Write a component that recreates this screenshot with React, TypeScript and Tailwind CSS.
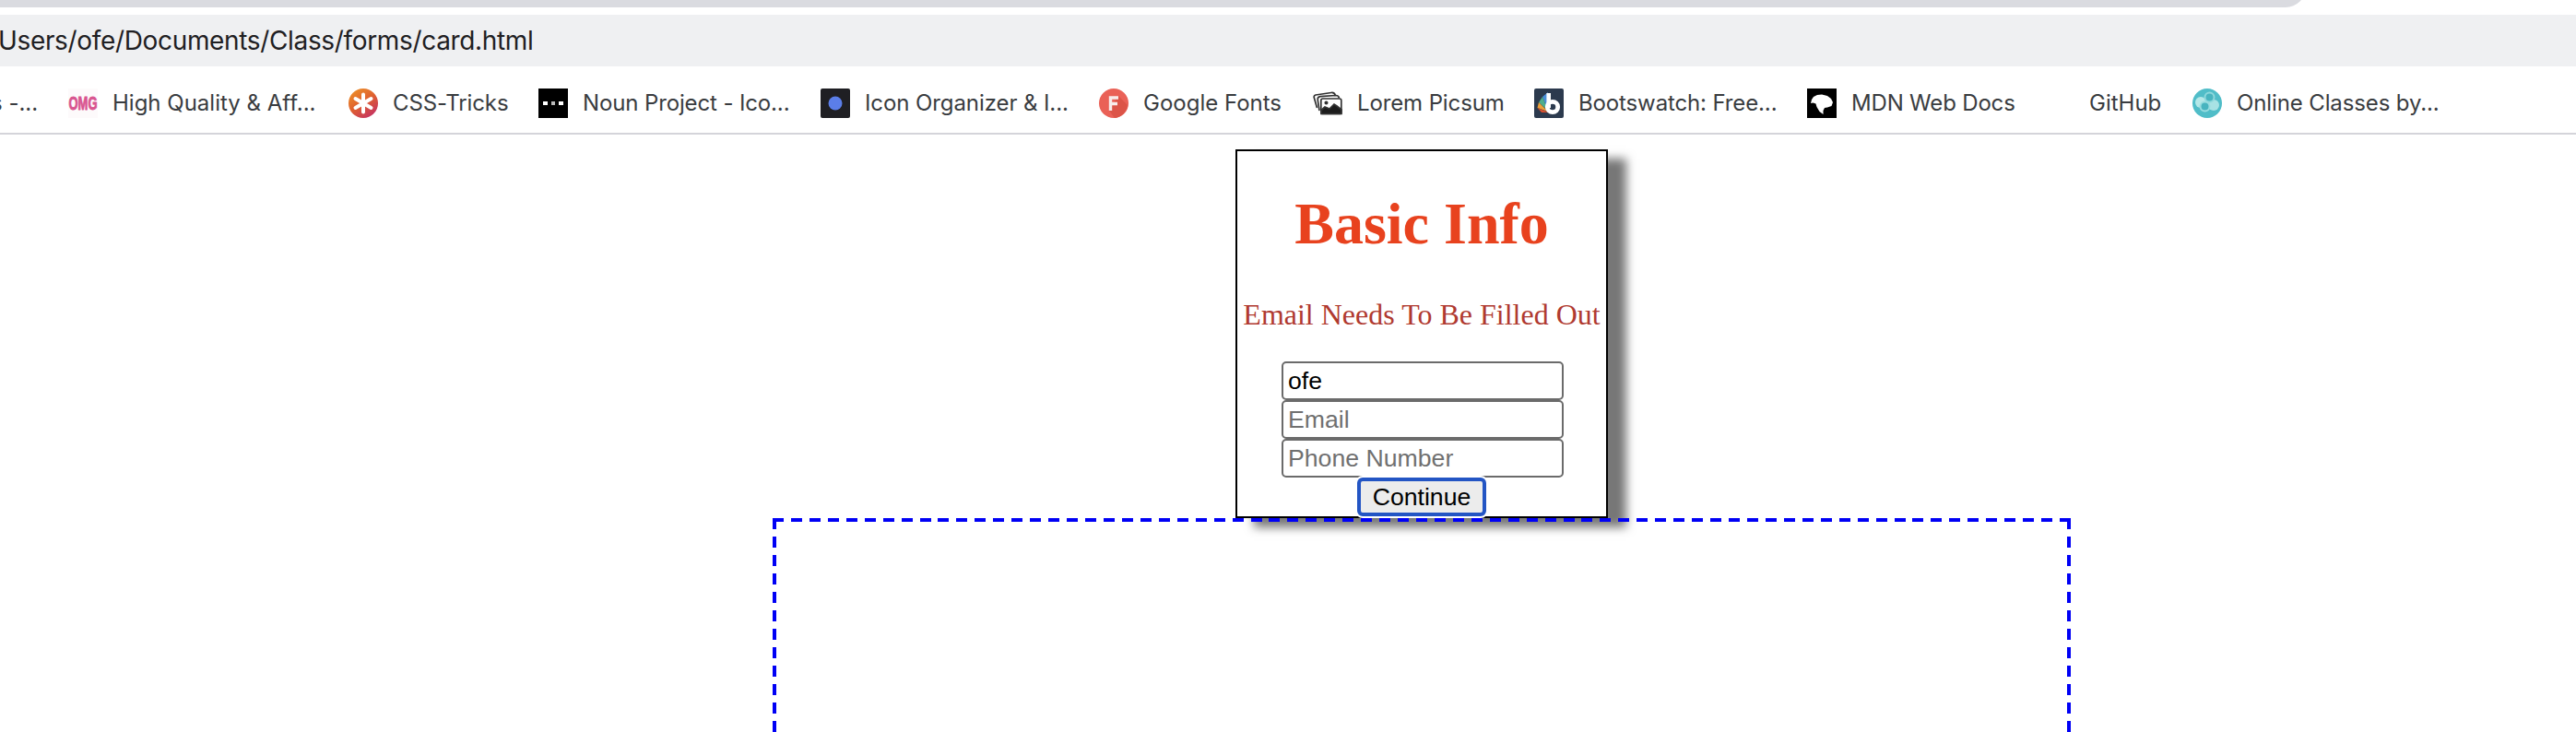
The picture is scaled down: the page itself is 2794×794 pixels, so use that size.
import React from "react";

const icon = "block h-8 w-8 shrink-0";

const Omg = () => (
  <svg className={icon} viewBox="0 0 32 32">
    <rect width="32" height="32" fill="#fdfafb" />
    <text x="0.5" y="23.2" fontFamily="Liberation Sans, sans-serif" fontWeight="700" fontSize="20" textLength="31" lengthAdjust="spacingAndGlyphs" fill="#d95590" stroke="#d95590" strokeWidth="0.9">OMG</text>
  </svg>
);
const Tricks = () => (
  <svg className={icon} viewBox="0 0 32 32">
    <defs>
      <linearGradient id="tricks" x1="0.1" y1="0" x2="0.8" y2="1">
        <stop offset="0" stopColor="#ee9428" />
        <stop offset="0.5" stopColor="#df602f" />
        <stop offset="1" stopColor="#c32f66" />
      </linearGradient>
    </defs>
    <circle cx="16" cy="16" r="16" fill="url(#tricks)" />
    <path d="M16 6.500v19M7.500 11l17 10M24.500 11l-17 10" stroke="#fff" strokeWidth="4" strokeLinecap="round" />
  </svg>
);
const Noun = () => (
  <svg className={icon} viewBox="0 0 32 32">
    <rect width="32" height="32" fill="#000" />
    <path d="M5 14h5v4H5zM22 14h5v4h-5z" fill="#fff" />
    <path d="M14 14h4v4h-4z" fill="#bbb" />
  </svg>
);
const Organizer = () => (
  <svg className={icon} viewBox="0 0 32 32">
    <rect width="32" height="32" rx="2" fill="#1f1f23" />
    <circle cx="16" cy="16" r="7.5" fill="#5b7ee8" />
  </svg>
);
const Fonts = () => (
  <svg className={icon} viewBox="0 0 32 32">
    <circle cx="16" cy="16" r="16" fill="#ea6157" />
    <path d="M21 8l10 10a16 16 0 0 1-14 14l-6-8z" fill="#dc5448" />
    <path d="M12.5 24V10H21M12.5 16.5H20" stroke="#f8eceb" strokeWidth="3.4" fill="none" />
  </svg>
);
const Picsum = () => (
  <svg className={icon} viewBox="0 0 32 32" fill="none" stroke="#333" strokeWidth="1.7">
    <path d="M4.500 21L1.200 9.500Q1 7.500 3 7L20 4.500Q23.500 4 24.500 8" />
    <path d="M7 24L5.200 12Q5 9 8 8.700L25 7.500Q28 7.500 28.500 10.500" />
    <rect x="8.800" y="11" width="22" height="16.500" rx="2" fill="#fff" />
    <path d="M9 27.500v-4l4-3.500 5 2 5-5 3 2 5 4v4.500z" fill="#1c1c1c" />
    <circle cx="14.500" cy="15.500" r="1.200" fill="#222" />
  </svg>
);
const Bootswatch = () => (
  <svg className={icon} viewBox="0 0 32 32">
    <rect width="32" height="32" rx="2" fill="#2c3a4e" />
    <path d="M15 4L9 9l6 15z" fill="#4b8ed8" />
    <path d="M9 9l-4 6 10 9z" fill="#4fae8c" />
    <path d="M5 15l-1.500 6L15 25z" fill="#eba13a" />
    <path d="M3.500 21l4.500 5h8z" fill="#d9502f" />
    <path d="M15.700 5v16" stroke="#fff" strokeWidth="4.600" />
    <circle cx="20" cy="20" r="5.700" fill="none" stroke="#fff" strokeWidth="4.800" />
  </svg>
);
const Mdn = () => (
  <svg className={icon} viewBox="0 0 32 32">
    <rect width="32" height="32" fill="#000" />
    <path d="M4 16l1-4 2-3 4-2 5-.5 6 1.500 4 3 2 4-1.500 4-4.500 1.500-3 .5-1.500 3v4l-4-3-3-5-1-3.500-3-1z" fill="#fff" />
  </svg>
);
const Classes = () => (
  <svg className={icon} viewBox="0 0 32 32">
    <circle cx="16" cy="16" r="16" fill="#50bdc8" />
    <circle cx="9" cy="15" r="6" fill="#b5e8e8" />
    <circle cx="23" cy="18" r="6" fill="#a8e2e4" />
    <circle cx="18.500" cy="9.500" r="5" fill="#48b4bf" stroke="#8ed8dc" strokeWidth="2" />
    <circle cx="13.500" cy="19.500" r="5" fill="#48b4bf" stroke="#9adde0" strokeWidth="2" />
  </svg>
);

const Bookmark = ({ width, label, children, tracking = "" }: { width: string; label: string; children?: React.ReactNode; tracking?: string }) => (
  <div className={`flex shrink-0 items-center ${width}`}>
    <div className="h-8 w-12 shrink-0">{children}</div>
    <span className={`whitespace-nowrap ${tracking}`}>{label}</span>
  </div>
);

const hDash = "bg-[repeating-linear-gradient(90deg,#0000f5_0_12px,transparent_12px_19.943px)]";
const vDash = "bg-[repeating-linear-gradient(180deg,#0000f5_0_12px,transparent_12px_19.96px)]";

export default function App() {
  return (
    <div className="flex h-[794px] w-[2794px] flex-col overflow-hidden bg-white">
      <div className="h-4 shrink-0 overflow-hidden">
        <div className="-mt-8 h-10 w-[2501px] rounded-br-[22px] bg-[#dadbe0]" />
      </div>
      <div className="flex h-14 shrink-0 items-center bg-[#eff0f2] font-['Inter',sans-serif] text-[28px] tracking-[-0.34px] text-[#1f2023]">
        <span className="-ml-[2px] whitespace-nowrap">Users/ofe/Documents/Class/forms/card.html</span>
      </div>
      <div className="flex h-[74px] shrink-0 items-center border-b-2 border-[#d4d4da] pt-2 font-['Inter',sans-serif] text-[24px] text-[#393c40]">
        <div className="-ml-[10px] w-[84px] shrink-0 whitespace-nowrap">s -...</div>
        <Bookmark width="w-[304px]" label="High Quality & Aff..."><Omg /></Bookmark>
        <Bookmark width="w-[206px]" label="CSS-Tricks" tracking="tracking-[-0.1px]"><Tricks /></Bookmark>
        <Bookmark width="w-[306px]" label="Noun Project - Ico..." tracking="tracking-[-0.13px]"><Noun /></Bookmark>
        <Bookmark width="w-[302px]" label="Icon Organizer & I..." tracking="tracking-[-0.09px]"><Organizer /></Bookmark>
        <Bookmark width="w-[232px]" label="Google Fonts"><Fonts /></Bookmark>
        <Bookmark width="w-[240px]" label="Lorem Picsum" tracking="tracking-[-0.12px]"><Picsum /></Bookmark>
        <Bookmark width="w-[296px]" label="Bootswatch: Free..." tracking="tracking-[-0.13px]"><Bootswatch /></Bookmark>
        <Bookmark width="w-[258px]" label="MDN Web Docs" tracking="tracking-[-0.18px]"><Mdn /></Bookmark>
        <Bookmark width="w-[160px]" label="GitHub" />
        <Bookmark width="w-[300px]" label="Online Classes by..." tracking="tracking-[-0.12px]"><Classes /></Bookmark>
      </div>
      <main className="flex flex-col items-center pt-4 pl-[290px] font-['Liberation_Serif',serif]">
        <form className="flex h-[400px] w-[404px] shrink-0 flex-col items-center border-2 border-black bg-white shadow-[20px_10px_10px_#777]">
          <h1 className="mt-[42px] h-[74px] text-[64px] leading-[74px] font-bold text-[#e8421e]">Basic Info</h1>
          <p className="mt-[43px] h-[36px] whitespace-nowrap text-[32px] leading-[36px] text-[#b03a30]">Email Needs To Be Filled Out</p>
          <div className="mt-[33px] flex flex-col pl-[2px] font-['Liberation_Sans',sans-serif] text-[26.67px]">
            <input className="h-[42px] w-[306px] rounded-[5px] border-2 border-[#6b6b6b] px-[5px] text-black" defaultValue="ofe" />
            <input className="h-[42px] w-[306px] rounded-[5px] border-2 border-[#6b6b6b] px-[5px] placeholder:text-[#707070]" placeholder="Email" />
            <input className="h-[42px] w-[306px] rounded-[5px] border-2 border-[#6b6b6b] px-[5px] placeholder:text-[#707070]" placeholder="Phone Number" />
          </div>
          <button type="button" className="z-10 h-[42px] w-[140px] shrink-0 rounded-[6px] border-4 border-[#2355c4] bg-[#ececec] font-['Liberation_Sans',sans-serif] text-[26.67px] leading-[34px] text-black ring-2 ring-white">Continue</button>
        </form>
        <div className="flex h-[232px] w-[1408px] shrink-0 flex-col">
          <div className={`h-1 shrink-0 ${hDash}`} />
          <div className="-mt-1 flex grow justify-between">
            <div className={`w-1 ${vDash}`} />
            <div className={`w-1 ${vDash}`} />
          </div>
        </div>
      </main>
    </div>
  );
}
